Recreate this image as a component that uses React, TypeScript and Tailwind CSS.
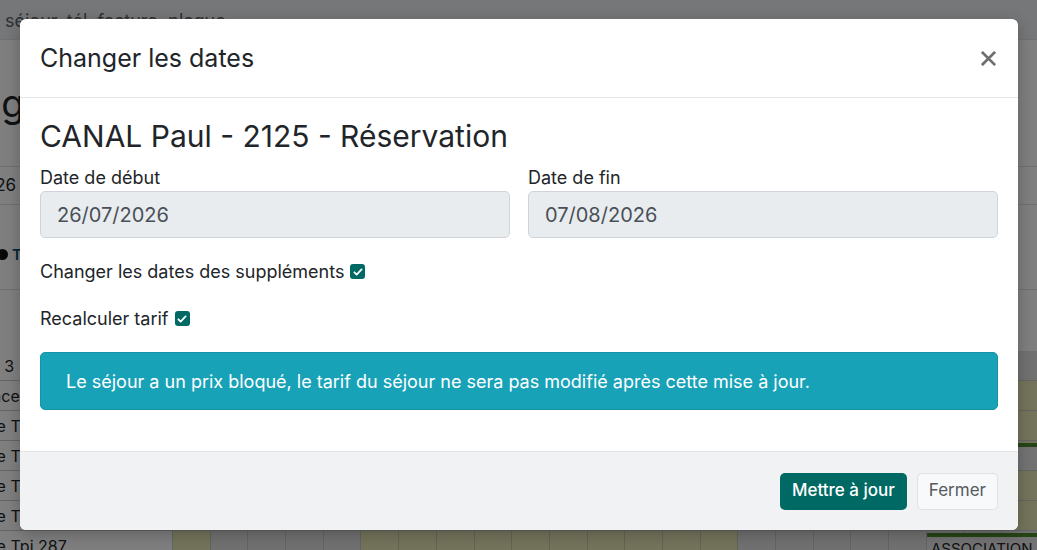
import React from "react";

type Row = { label: string; olive: number[]; bar?: { from: number; text: string } };

const OLIVE_WEEK = [0, 5, 6, 7, 8, 9, 10, 11, 12, 13, 14];

const rows: Row[] = [
  { label: "Juillet 3", olive: [] },
  { label: "Emplacement Court", olive: [...OLIVE_WEEK, 21, 22] },
  { label: "Mobile Tpi 281", olive: [...OLIVE_WEEK, 21, 22] },
  { label: "Mobile Tpi 282", olive: [...OLIVE_WEEK, 21, 22], bar: { from: 18, text: "DURAND" } },
  { label: "Mobile Tpi 284", olive: [...OLIVE_WEEK, 21, 22] },
  { label: "Mobile Tpi 285", olive: [...OLIVE_WEEK, 21, 22] },
  { label: "Mobile Tpi 287", olive: OLIVE_WEEK, bar: { from: 20, text: "ASSOCIATION LES AMIS" } },
];

const COLS = Array.from({ length: 23 }, (_, i) => i);

function PlanningPage() {
  return (
    <div className="flex h-[550px] w-[1037px] flex-col overflow-hidden bg-white text-[#212529]">
      {/* search bar */}
      <div className="flex h-[40px] shrink-0 items-end border-b border-[#dee2e6] bg-[#eceef0] pl-[5px]">
        <span className="whitespace-nowrap pb-[5px] text-[18px] leading-[26px] text-[#5c636a]">
          séjour, tél, facture, plaque
        </span>
      </div>
      {/* heading */}
      <div className="flex h-[127px] shrink-0 items-center overflow-hidden border-b border-[#dee2e6]">
        <h1 className="-ml-[130px] whitespace-nowrap text-[38px] leading-[44px]">Planning</h1>
      </div>
      {/* date selector */}
      <div className="flex h-[38px] shrink-0 items-center overflow-hidden border-b border-[#dee2e6]">
        <span className="-ml-[52px] whitespace-nowrap text-[17px]">07/2026</span>
      </div>
      {/* legend */}
      <div className="flex h-[85px] shrink-0 items-end overflow-hidden border-b border-[#dee2e6] pb-[23px]">
        <span className="-ml-[3px] flex items-center gap-[4px] whitespace-nowrap text-[15px] font-semibold text-[#0b4f6c]">
          <span className="h-[11px] w-[11px] rounded-full bg-[#111]" />
          Tous
        </span>
      </div>
      <div className="h-[61px] shrink-0" />
      {/* grid */}
      <div className="flex flex-col">
        {rows.map((r, ri) => (
          <div key={ri} className="flex h-[30px] shrink-0 border-b border-[#c8c8c8]">
            <div className="flex w-[173px] shrink-0 items-center overflow-hidden border-r border-[#c8c8c8]">
              <span className="-ml-[45px] whitespace-nowrap text-[16px]">{r.label}</span>
            </div>
            <div className="relative flex">
              {COLS.map((c) => (
                <div
                  key={c}
                  className={
                    r.olive.includes(c)
                      ? "h-full w-[37.7px] shrink-0 border-r border-[#c9c9a8] bg-[#e8e8b8]"
                      : "h-full w-[37.7px] shrink-0 border-r border-[#c8c8c8] bg-[#e2e2e2]"
                  }
                />
              ))}
              {r.bar && (
                <div
                  className="absolute bottom-0 top-[2px] w-[300px] overflow-hidden whitespace-nowrap border-t-[4px] border-[#4c8a2a] bg-[#e6e6e6] pl-[4px] text-[15px] leading-[24px]"
                  style={{ left: r.bar.from * 37.7 }}
                >
                  {r.bar.text}
                </div>
              )}
            </div>
          </div>
        ))}
      </div>
    </div>
  );
}

function CheckMark() {
  return (
    <span className="ml-[6px] inline-flex h-[15px] w-[15px] items-center justify-center rounded-[3px] bg-[#006963]">
      <svg viewBox="0 0 16 16" className="h-[12px] w-[12px]" fill="none">
        <path d="M3.2 8.4l3 3 6.6-6.8" stroke="#fff" strokeWidth="2.4" strokeLinecap="round" strokeLinejoin="round" />
      </svg>
    </span>
  );
}

function DateField({ label, value }: { label: string; value: string }) {
  return (
    <div className="flex flex-1 flex-col">
      <label className="text-[18px] leading-[27px] text-[#212529]">{label}</label>
      <div className="flex h-[47px] items-center rounded-[5px] border border-[#ced4da] bg-[#e9ecef] px-4 text-[20px] text-[#495057]">
        {value}
      </div>
    </div>
  );
}

export default function App() {
  return (
    <div className="relative h-[550px] w-[1037px] overflow-hidden [font-family:Inter,'Noto_Sans',sans-serif]">
      <PlanningPage />
      {/* backdrop */}
      <div className="absolute inset-0 bg-black/50" />
      {/* dialog */}
      <div className="absolute left-[20px] top-[19px] flex w-[998px] flex-col overflow-hidden rounded-[6px] bg-white shadow-[0_4px_16px_rgba(0,0,0,0.25)]">
        <div className="flex h-[79px] items-center justify-between border-b border-[#e3e5e8] px-5">
          <h5 className="text-[25px] leading-[30px] text-[#212529]">Changer les dates</h5>
          <button className="mr-[2px] flex h-[16px] w-[16px] items-center justify-center" aria-label="Fermer">
            <svg viewBox="0 0 16 16" className="h-[15px] w-[15px]">
              <path d="M2 2l12 12M14 2L2 14" stroke="#6f6f6f" strokeWidth="3" strokeLinecap="square" />
            </svg>
          </button>
        </div>
        <div className="flex flex-col px-5 pb-[41px] pt-[21px]">
          <h3 className="text-[30px] leading-[34px] text-[#212529]">CANAL Paul - 2125 - Réservation</h3>
          <div className="mt-[11px] flex gap-[18px]">
            <DateField label="Date de début" value="26/07/2026" />
            <DateField label="Date de fin" value="07/08/2026" />
          </div>
          <div className="mt-[20px] flex items-center text-[18px] leading-[27px] text-[#212529]">
            Changer les dates des suppléments
            <CheckMark />
          </div>
          <div className="mt-[20px] flex items-center text-[18px] leading-[27px] text-[#212529]">
            Recalculer tarif
            <CheckMark />
          </div>
          <div className="mt-[20px] flex h-[58px] items-center rounded-[5px] border border-[#1594a8] bg-[#18a2b8] px-[25px] text-[18px] text-white">
            Le séjour a un prix bloqué, le tarif du séjour ne sera pas modifié après cette mise à jour.
          </div>
        </div>
        <div className="flex h-[79px] items-center justify-end gap-[10px] border-t border-[#e3e5e8] bg-[#f1f2f4] px-5">
          <button className="h-[37px] rounded-[5px] bg-[#006963] px-[12px] text-[17px] font-medium text-white">
            Mettre à jour
          </button>
          <button className="h-[37px] rounded-[5px] border border-[#dee2e6] bg-[#f8f9fa] px-[11px] text-[17px] text-[#555b61]">
            Fermer
          </button>
        </div>
      </div>
    </div>
  );
}
